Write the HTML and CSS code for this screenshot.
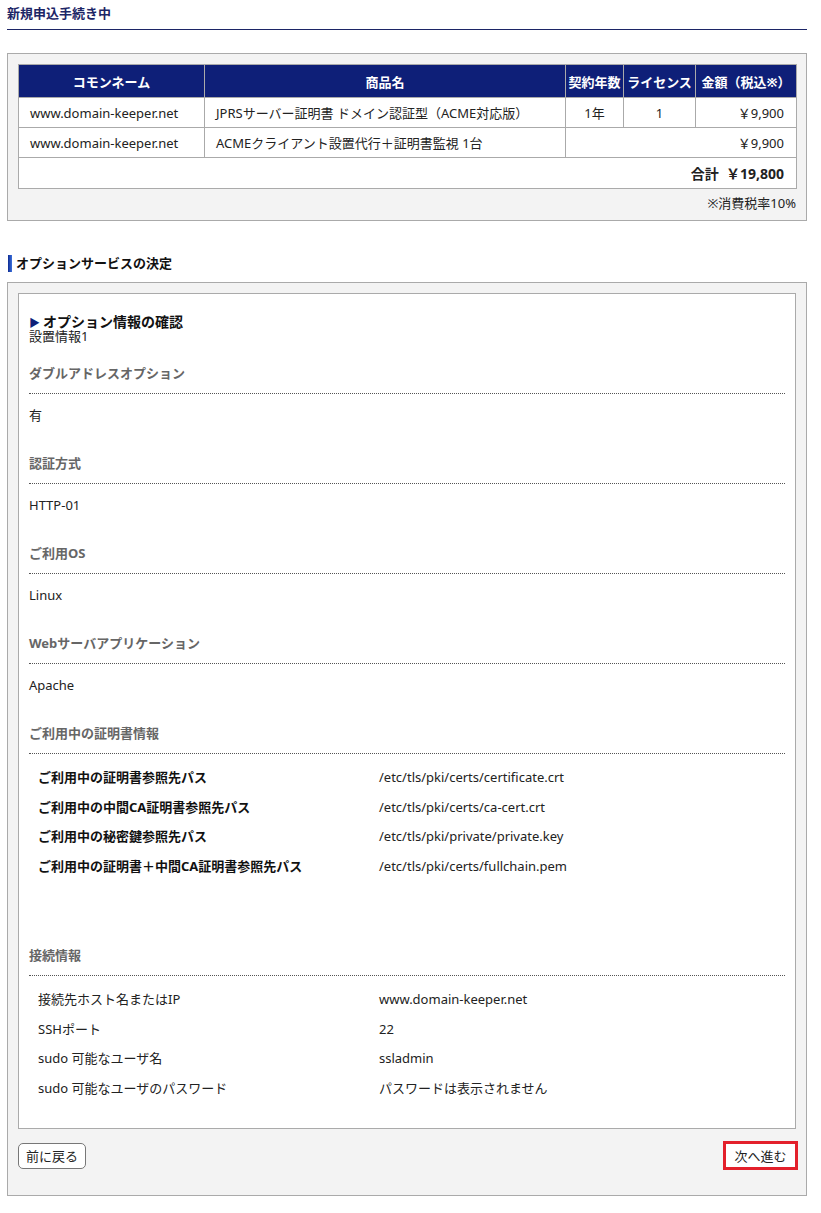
FILE: index.html
```html
<!DOCTYPE html>
<html lang="ja">
<head>
  <meta charset="UTF-8" />
  <title>新規申込手続き中</title>
  <link rel="stylesheet" href="styles.css">
</head>
<body>
  <div id="page">
    <h1 class="page-title">新規申込手続き中</h1>

    <div class="panel">
      <table class="order">
        <colgroup>
          <col style="width: 186px">
          <col style="width: 361px">
          <col style="width: 58px">
          <col style="width: 72px">
          <col style="width: 101px">
        </colgroup>
        <thead>
          <tr>
            <th>コモンネーム</th>
            <th>商品名</th>
            <th>契約年数</th>
            <th>ライセンス</th>
            <th>金額（税込※）</th>
          </tr>
        </thead>
        <tbody>
          <tr>
            <td>www.domain-keeper.net</td>
            <td>JPRSサーバー証明書 ドメイン認証型（ACME対応版）</td>
            <td class="center">1年</td>
            <td class="center">1</td>
            <td class="price">￥9,900</td>
          </tr>
          <tr>
            <td>www.domain-keeper.net</td>
            <td>ACMEクライアント設置代行＋証明書監視 1台</td>
            <td class="price" colspan="3">￥9,900</td>
          </tr>
          <tr class="total">
            <td colspan="5">合計&nbsp;&nbsp;￥19,800</td>
          </tr>
        </tbody>
      </table>
      <p class="tax-note">※消費税率10%</p>
    </div>

    <h2 class="section-title">オプションサービスの決定</h2>

    <div class="panel">
      <div class="option-box">
        <h3 class="confirm-title">オプション情報の確認</h3>
        <p class="setting-name">設置情報1</p>

        <div class="option-item">
          <h4>ダブルアドレスオプション</h4>
          <p>有</p>
        </div>
        <div class="option-item">
          <h4>認証方式</h4>
          <p>HTTP-01</p>
        </div>
        <div class="option-item">
          <h4>ご利用OS</h4>
          <p>Linux</p>
        </div>
        <div class="option-item">
          <h4>Webサーバアプリケーション</h4>
          <p>Apache</p>
        </div>
        <div class="option-item">
          <h4>ご利用中の証明書情報</h4>
          <dl class="detail bold-labels">
            <dt>ご利用中の証明書参照先パス</dt>
            <dd>/etc/tls/pki/certs/certificate.crt</dd>
            <dt>ご利用中の中間CA証明書参照先パス</dt>
            <dd>/etc/tls/pki/certs/ca-cert.crt</dd>
            <dt>ご利用中の秘密鍵参照先パス</dt>
            <dd>/etc/tls/pki/private/private.key</dd>
            <dt>ご利用中の証明書＋中間CA証明書参照先パス</dt>
            <dd>/etc/tls/pki/certs/fullchain.pem</dd>
          </dl>
        </div>
        <div class="option-item last">
          <h4>接続情報</h4>
          <dl class="detail">
            <dt>接続先ホスト名またはIP</dt>
            <dd>www.domain-keeper.net</dd>
            <dt>SSHポート</dt>
            <dd>22</dd>
            <dt>sudo 可能なユーザ名</dt>
            <dd>ssladmin</dd>
            <dt>sudo 可能なユーザのパスワード</dt>
            <dd>パスワードは表示されません</dd>
          </dl>
        </div>
      </div>

      <div class="actions">
        <button class="btn">前に戻る</button>
        <button class="btn next">次へ進む</button>
      </div>
    </div>
  </div>
</body>
</html>
```

FILE: styles.css
```css
html, body {
  margin: 0;
  padding: 0;
  background: #fff;
  color: #222;
  font-family: "Noto Sans", "Noto Sans CJK JP", sans-serif;
  font-size: 13px;
}

#page {
  width: 800px;
  padding: 0 0 20px 7px;
}

.page-title {
  margin: 0;
  padding: 4px 0 7px;
  font-size: 13px;
  line-height: 18px;
  color: #1c2566;
  border-bottom: 1px solid #1c2566;
}

.panel {
  margin-top: 23px;
  padding: 10px 10px 8px;
  background: #f3f3f3;
  border: 1px solid #aaa;
}

/* order table */
.order {
  width: 100%;
  border-collapse: collapse;
  table-layout: fixed;
  background: #fff;
  border: 1px solid #aaa;
}

.order th {
  height: 32px;
  padding: 0;
  background: #0e1f78;
  color: #fff;
  font-weight: bold;
  border: 1px solid #aaa;
}

.order td {
  height: 29px;
  padding: 0 11px;
  border: 1px solid #aaa;
  white-space: nowrap;
}

.order td.center {
  text-align: center;
}

.order td.price {
  text-align: right;
  padding-right: 12px;
}

.order tr.total td {
  height: 30px;
  text-align: right;
  padding-right: 12px;
  font-weight: bold;
  font-size: 14px;
}

.tax-note {
  margin: 5px 0 0;
  line-height: 18px;
  text-align: right;
}

/* section heading */
.section-title {
  margin: 33px 0 10px;
  font-size: 13px;
  line-height: 18px;
  color: #111;
}

.section-title::before {
  content: "";
  display: inline-block;
  width: 4px;
  height: 17px;
  margin: 0 4px 0 1px;
  vertical-align: -4px;
  background: linear-gradient(90deg, #0d2a92, #3d72dc);
}

.section-title + .panel {
  margin-top: 0;
  padding-bottom: 25px;
}

/* option info */
.option-box {
  background: #fff;
  border: 1px solid #aaa;
  padding: 22px 10px 25px;
}

.confirm-title {
  margin: 0;
  font-size: 14px;
  line-height: 12px;
  color: #111;
}

.confirm-title::before {
  content: "▶";
  color: #0e1f78;
  font-size: 11px;
  margin-right: 3px;
}

.setting-name {
  margin: 0;
  line-height: 14px;
}

.option-item h4 {
  margin: 21px 0 0;
  padding-bottom: 11px;
  font-size: 13px;
  line-height: 18px;
  color: #666;
  border-bottom: 1px dotted #555;
}

.option-item + .option-item h4 {
  margin-top: 30px;
}

.option-item p {
  margin: 12px 0 0;
  line-height: 18px;
}

.detail {
  display: grid;
  grid-template-columns: 341px 1fr;
  margin: 9px 0 0;
  padding-left: 9px;
}

.detail dt,
.detail dd {
  margin: 0;
  line-height: 29.5px;
}

.bold-labels dt {
  font-weight: bold;
  color: #111;
}

.option-item.last h4 {
  margin-top: 65px;
}

/* buttons */
.actions {
  display: flex;
  justify-content: space-between;
  align-items: center;
  margin-top: 12px;
}

.btn {
  font-family: inherit;
  font-size: 13px;
  color: #222;
  background: #fff;
  border: 1px solid #777;
  border-radius: 5px;
  padding: 0 6px;
  height: 26px;
  width: 68px;
}

.btn.next {
  border: 3px solid #e3202b;
  border-radius: 0;
  width: 75px;
  height: 29px;
  margin-right: -2px;
}
```
